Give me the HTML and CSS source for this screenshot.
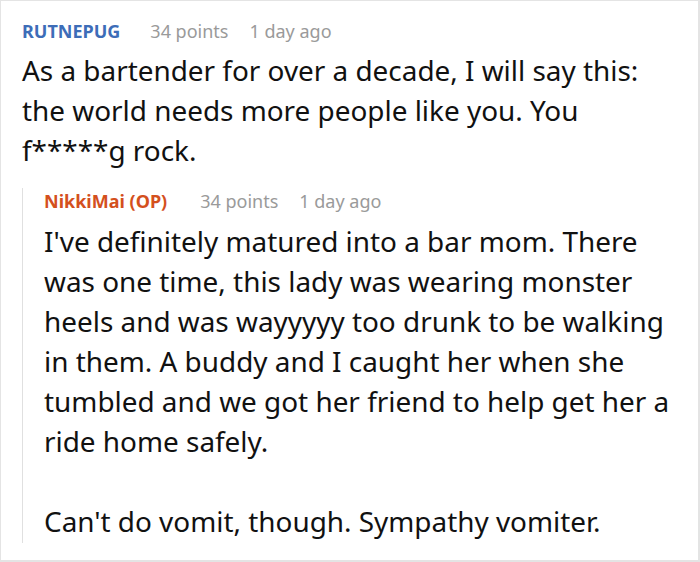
FILE: index.html
```html
<!DOCTYPE html>
<html>
<head>
<meta charset="utf-8">
<link rel="stylesheet" href="styles.css">
</head>
<body>
<div class="thread">
  <div class="comment">
    <div class="meta">
      <span class="name name-blue">RUTNEPUG</span>
      <span class="points">34 points</span>
      <span class="time">1 day ago</span>
    </div>
    <p class="text">As a bartender for over a decade, I will say this:<br>the world needs more people like you. You<br>f*****g rock.</p>
  </div>
  <div class="reply">
    <div class="meta meta-reply">
      <span class="name name-orange">NikkiMai (OP)</span>
      <span class="points">34 points</span>
      <span class="time">1 day ago</span>
    </div>
    <p class="text">I've definitely matured into a bar mom. There<br>was one time, this lady was wearing monster<br>heels and was wayyyyy too drunk to be walking<br>in them. A buddy and I caught her when she<br>tumbled and we got her friend to help get her a<br>ride home safely.</p>
    <p class="text text-gap">Can't do vomit, though. Sympathy vomiter.</p>
  </div>
</div>
</body>
</html>
```

FILE: styles.css
```css
html, body {
  margin: 0;
  padding: 0;
  background: #fff;
}

.thread {
  box-sizing: border-box;
  width: 700px;
  height: 562px;
  border: 1px solid #e4e4e4;
  border-right-width: 2px;
  border-bottom-width: 2px;
  padding: 17px 20px 0 21px;
  font-family: "Noto Sans", "Open Sans", sans-serif;
  color: #111;
  overflow: hidden;
}

.meta {
  display: flex;
  align-items: center;
  height: 26px;
  font-size: 18px;
  line-height: 26px;
  white-space: nowrap;
}

.name {
  font-weight: 700;
  margin-right: 30px;
}

.name-blue {
  color: #3d6db8;
}

.name-orange {
  color: #d4501d;
  margin-right: 33px;
}

.points {
  color: #9a9a9a;
  margin-right: 21px;
}

.time {
  color: #9a9a9a;
}

.text {
  margin: 6px 0 0 0;
  font-size: 27.9px;
  line-height: 40px;
  white-space: nowrap;
}

.reply {
  margin-top: 30px;
  border-left: 1px solid #e0e0e0;
  padding: 0 0 2px 21px;
}

.meta-reply {
  margin-top: -12px;
}

.reply .text {
  margin-top: 7px;
}

.reply .text-gap {
  margin-top: 40px;
}
```
